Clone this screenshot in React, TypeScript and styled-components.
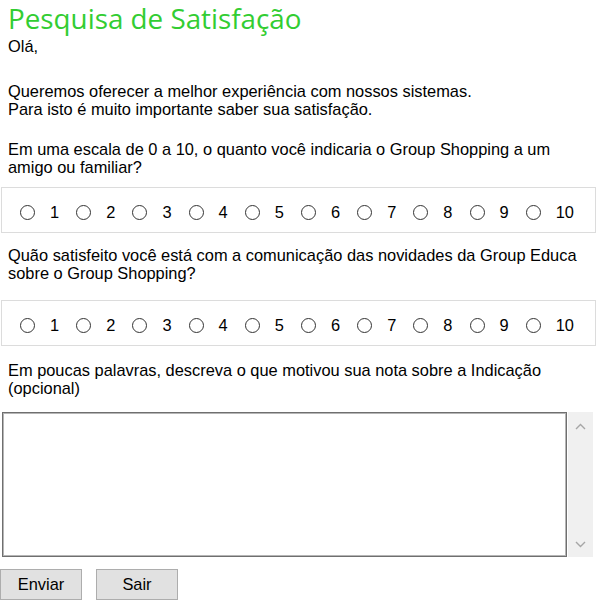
import { FC, useState } from 'react';
import styled, { createGlobalStyle } from 'styled-components';

const GlobalStyle = createGlobalStyle`
    html, body {
        margin: 0;
        padding: 0;
        background: #ffffff;
    }
    body {
        font-family: 'Liberation Sans', Arial, sans-serif;
        font-size: 16.4px;
        color: #000000;
    }
`;

const scale = [1, 2, 3, 4, 5, 6, 7, 8, 9, 10];

const RatingPanel: FC<{ name: string; value: number | null; onChange: (v: number) => void; $top: number }> = ({
    name,
    value,
    onChange,
    $top,
}) => (
    <Panel $top={$top}>
        {scale.map((n) => (
            <Option key={n}>
                <RadioInput
                    type="radio"
                    name={name}
                    checked={value === n}
                    onChange={() => onChange(n)}
                />
                <OptionLabel>{n}</OptionLabel>
            </Option>
        ))}
    </Panel>
);

const Chevron: FC<{ up?: boolean }> = ({ up }) => (
    <svg width="11" height="7" viewBox="0 0 11 7">
        <polyline
            points={up ? '1,6 5.5,1.5 10,6' : '1,1 5.5,5.5 10,1'}
            fill="none"
            stroke="#a6a6a6"
            strokeWidth="1.4"
        />
    </svg>
);

export default function App() {
    const [indication, setIndication] = useState<number | null>(null);
    const [communication, setCommunication] = useState<number | null>(null);
    const [comment, setComment] = useState('');

    return (
        <Page>
            <GlobalStyle />
            <Title>Pesquisa de Satisfação</Title>
            <Text $top={1}>Olá,</Text>
            <Text $top={27}>
                Queremos oferecer a melhor experiência com nossos sistemas.
                <br />
                Para isto é muito importante saber sua satisfação.
            </Text>
            <Text $top={22}>
                Em uma escala de 0 a 10, o quanto você indicaria o Group Shopping a um amigo ou familiar?
            </Text>
            <RatingPanel name="indicacao" value={indication} onChange={setIndication} $top={11} />
            <Text $top={13}>
                Quão satisfeito você está com a comunicação das novidades da Group Educa sobre o Group Shopping?
            </Text>
            <RatingPanel name="comunicacao" value={communication} onChange={setCommunication} $top={18} />
            <Text $top={15}>
                Em poucas palavras, descreva o que motivou sua nota sobre a Indicação (opcional)
            </Text>
            <CommentRow>
                <CommentBox value={comment} onChange={(e) => setComment(e.target.value)} />
                <ScrollBar>
                    <Chevron up />
                    <Chevron />
                </ScrollBar>
            </CommentRow>
            <Actions>
                <Button type="button">Enviar</Button>
                <Button type="button">Sair</Button>
            </Actions>
        </Page>
    );
}

const Page = styled.div`
    width: 598px;
    height: 600px;
    overflow: hidden;
    display: flex;
    flex-direction: column;
`;

const Title = styled.h1`
    margin: 0;
    padding-left: 8px;
    font-family: 'Open Sans', 'Noto Sans', sans-serif;
    font-weight: 400;
    font-size: 27.8px;
    line-height: 36px;
    color: #32cd32;
`;

const Text = styled.p<{ $top: number }>`
    margin: ${(p) => p.$top}px 0 0;
    padding: 0 4px 0 8px;
    line-height: 18px;
`;

const Panel = styled.div<{ $top: number }>`
    margin: ${(p) => p.$top}px 0 0 1px;
    width: 595px;
    height: 46px;
    box-sizing: border-box;
    border: 1px solid #dcdcdc;
    padding: 15px 0 0 18px;
    display: grid;
    grid-template-columns: repeat(10, 56.2px);
    align-items: start;
`;

const Option = styled.label`
    display: flex;
    align-items: center;
    height: 18px;
    cursor: pointer;
`;

const RadioInput = styled.input`
    appearance: none;
    margin: 0;
    width: 15px;
    height: 15px;
    box-sizing: border-box;
    border: 1.5px solid #333333;
    border-radius: 50%;
    background: #ffffff;

    &:checked {
        background: radial-gradient(circle, #333333 0 3px, #ffffff 3.5px);
    }
`;

const OptionLabel = styled.span`
    margin-left: 15px;
    line-height: 18px;
`;

const CommentRow = styled.div`
    margin: 15px 0 0 2px;
    display: flex;
    gap: 1px;
    height: 145px;
`;

const CommentBox = styled.textarea`
    width: 565px;
    height: 145px;
    box-sizing: border-box;
    margin: 0;
    padding: 2px 4px;
    border: 1px solid #6f6f6f;
    box-shadow: inset 0 0 0 1px #b5b5b5;
    resize: none;
    font: inherit;
    outline: none;
`;

const ScrollBar = styled.div`
    width: 25px;
    background: #f0f0f0;
    display: flex;
    flex-direction: column;
    justify-content: space-between;
    align-items: center;
    padding: 11px 0 9px;
    box-sizing: border-box;
`;

const Actions = styled.div`
    margin-top: 12px;
    display: flex;
    gap: 14px;
`;

const Button = styled.button`
    width: 82px;
    height: 31px;
    margin: 0;
    padding: 0;
    background: #e1e1e1;
    border: 1px solid #adadad;
    font: inherit;
    color: #000000;
`;
